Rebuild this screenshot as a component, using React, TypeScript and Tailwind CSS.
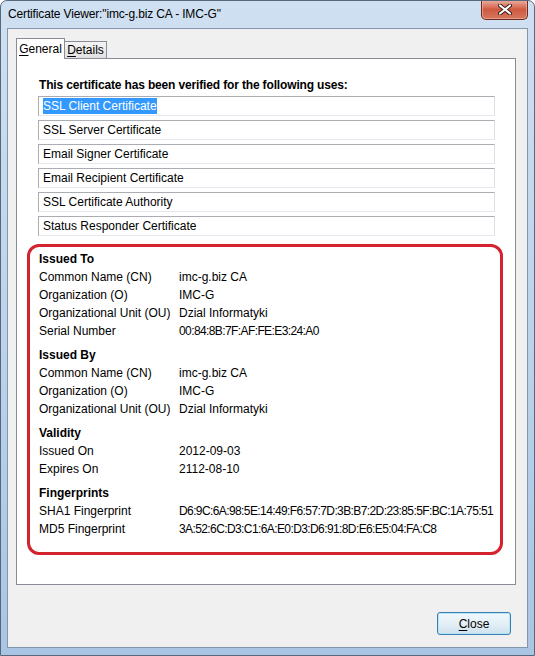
const uses = [
  'SSL Client Certificate',
  'SSL Server Certificate',
  'Email Signer Certificate',
  'Email Recipient Certificate',
  'SSL Certificate Authority',
  'Status Responder Certificate',
];

const sections: { title: string; rows: [string, string][] }[] = [
  {
    title: 'Issued To',
    rows: [
      ['Common Name (CN)', 'imc-g.biz CA'],
      ['Organization (O)', 'IMC-G'],
      ['Organizational Unit (OU)', 'Dzial Informatyki'],
      ['Serial Number', '00:84:8B:7F:AF:FE:E3:24:A0'],
    ],
  },
  {
    title: 'Issued By',
    rows: [
      ['Common Name (CN)', 'imc-g.biz CA'],
      ['Organization (O)', 'IMC-G'],
      ['Organizational Unit (OU)', 'Dzial Informatyki'],
    ],
  },
  {
    title: 'Validity',
    rows: [
      ['Issued On', '2012-09-03'],
      ['Expires On', '2112-08-10'],
    ],
  },
  {
    title: 'Fingerprints',
    rows: [
      ['SHA1 Fingerprint', 'D6:9C:6A:98:5E:14:49:F6:57:7D:3B:B7:2D:23:85:5F:BC:1A:75:51'],
      ['MD5 Fingerprint', '3A:52:6C:D3:C1:6A:E0:D3:D6:91:8D:E6:E5:04:FA:C8'],
    ],
  },
];

const CloseGlyph = () => (
  <svg width="14" height="11" viewBox="0 0 14 11">
    <path d="M2 1.5 L12 9.5 M12 1.5 L2 9.5" stroke="#3a1a14" strokeWidth="4" strokeLinecap="round" />
    <path d="M2 1.5 L12 9.5 M12 1.5 L2 9.5" stroke="#ffffff" strokeWidth="2.2" strokeLinecap="round" />
  </svg>
);

export default function App() {
  return (
    <div className="w-[535px] h-[656px] flex flex-col rounded-t-[7px] border border-[#56687c] bg-linear-to-b from-[#cfe0f2] via-[#bcd3eb] to-[#aac5e3] font-['Liberation_Sans',Arial,sans-serif] text-[12px] text-black overflow-hidden">
      {/* title bar */}
      <div className="h-[27px] flex items-start justify-between">
        <div className="pl-[7px] pt-[5px] leading-[16px] text-[12px] tracking-[-0.15px]">Certificate Viewer:"imc-g.biz CA - IMC-G"</div>
        <div className="mr-[6px] -mt-px w-[47px] h-[20px] rounded-b-[5px] border border-t-0 border-[#6b2a1e] bg-linear-to-b from-[#eab0a2] via-[#cf5a40] to-[#d4765c] flex items-center justify-center shadow-[inset_0_0_0_1px_rgba(255,200,190,0.5)]">
          <CloseGlyph />
        </div>
      </div>

      {/* client area */}
      <div className="flex-1 mx-[6px] mb-[7px] border border-[#8496ab] bg-[#f0f0f0] pl-[8px] pt-[9px] flex flex-col">
        {/* tabs */}
        <div className="flex items-end h-[20px]">
          <div className="relative z-10 w-[49px] h-[21px] -mb-px border border-b-0 border-[#898c95] bg-white flex items-center justify-center leading-[16px]">
            <span><span className="underline underline-offset-2">G</span>eneral</span>
          </div>
          <div className="w-[42px] h-[17px] border border-l-0 border-b-0 border-[#898c95] bg-linear-to-b from-[#f4f4f4] to-[#e1e1e1] flex items-center justify-center leading-[14px]">
            <span><span className="underline underline-offset-2">D</span>etails</span>
          </div>
        </div>

        {/* panel */}
        <div className="w-[500px] h-[527px] border border-[#898c95] bg-white pl-[22px] pt-[18px]">
          <div className="font-bold leading-[16px] tracking-[-0.15px]">This certificate has been verified for the following uses:</div>
          <div className="mt-[3px] -ml-px flex flex-col gap-[4px]">
            {uses.map((u, i) => (
              <div
                key={u}
                className="w-[457px] h-[20px] border border-[#abadb3] border-b-[#e3e9ef] border-r-[#dbdfe6] pl-[4px] flex items-center leading-[16px]"
              >
                {i === 0 ? <span className="bg-[#3399ff] text-white">{u}</span> : <span>{u}</span>}
              </div>
            ))}
          </div>

          <div className="mt-[8px] -ml-[12px] w-[476px] h-[311px] border-[3px] border-[#d2232f] rounded-[12px] pt-[3px] pl-[9px] flex flex-col gap-[6px]">
            {sections.map((s) => (
              <div key={s.title} className="flex flex-col">
                <div className="h-[18px] leading-[18px] font-bold">{s.title}</div>
                {s.rows.map(([k, v]) => (
                  <div key={k} className="h-[18px] leading-[18px] flex">
                    <div className="w-[140px] shrink-0">{k}</div>
                    <div className={v.includes(':') ? 'whitespace-nowrap tracking-[-0.6px]' : 'whitespace-nowrap'}>{v}</div>
                  </div>
                ))}
              </div>
            ))}
          </div>
        </div>

        {/* bottom button */}
        <div className="mt-[27px] ml-[421px]">
          <button className="w-[74px] h-[23px] rounded-[3px] border border-[#3c7fb1] bg-linear-to-b from-[#f1f8fc] via-[#e4f0f7] to-[#cfe1ec] shadow-[inset_0_0_0_1px_#b4e6f8] flex items-center justify-center leading-[16px]">
            <span><span className="underline underline-offset-2">C</span>lose</span>
          </button>
        </div>
      </div>
    </div>
  );
}
